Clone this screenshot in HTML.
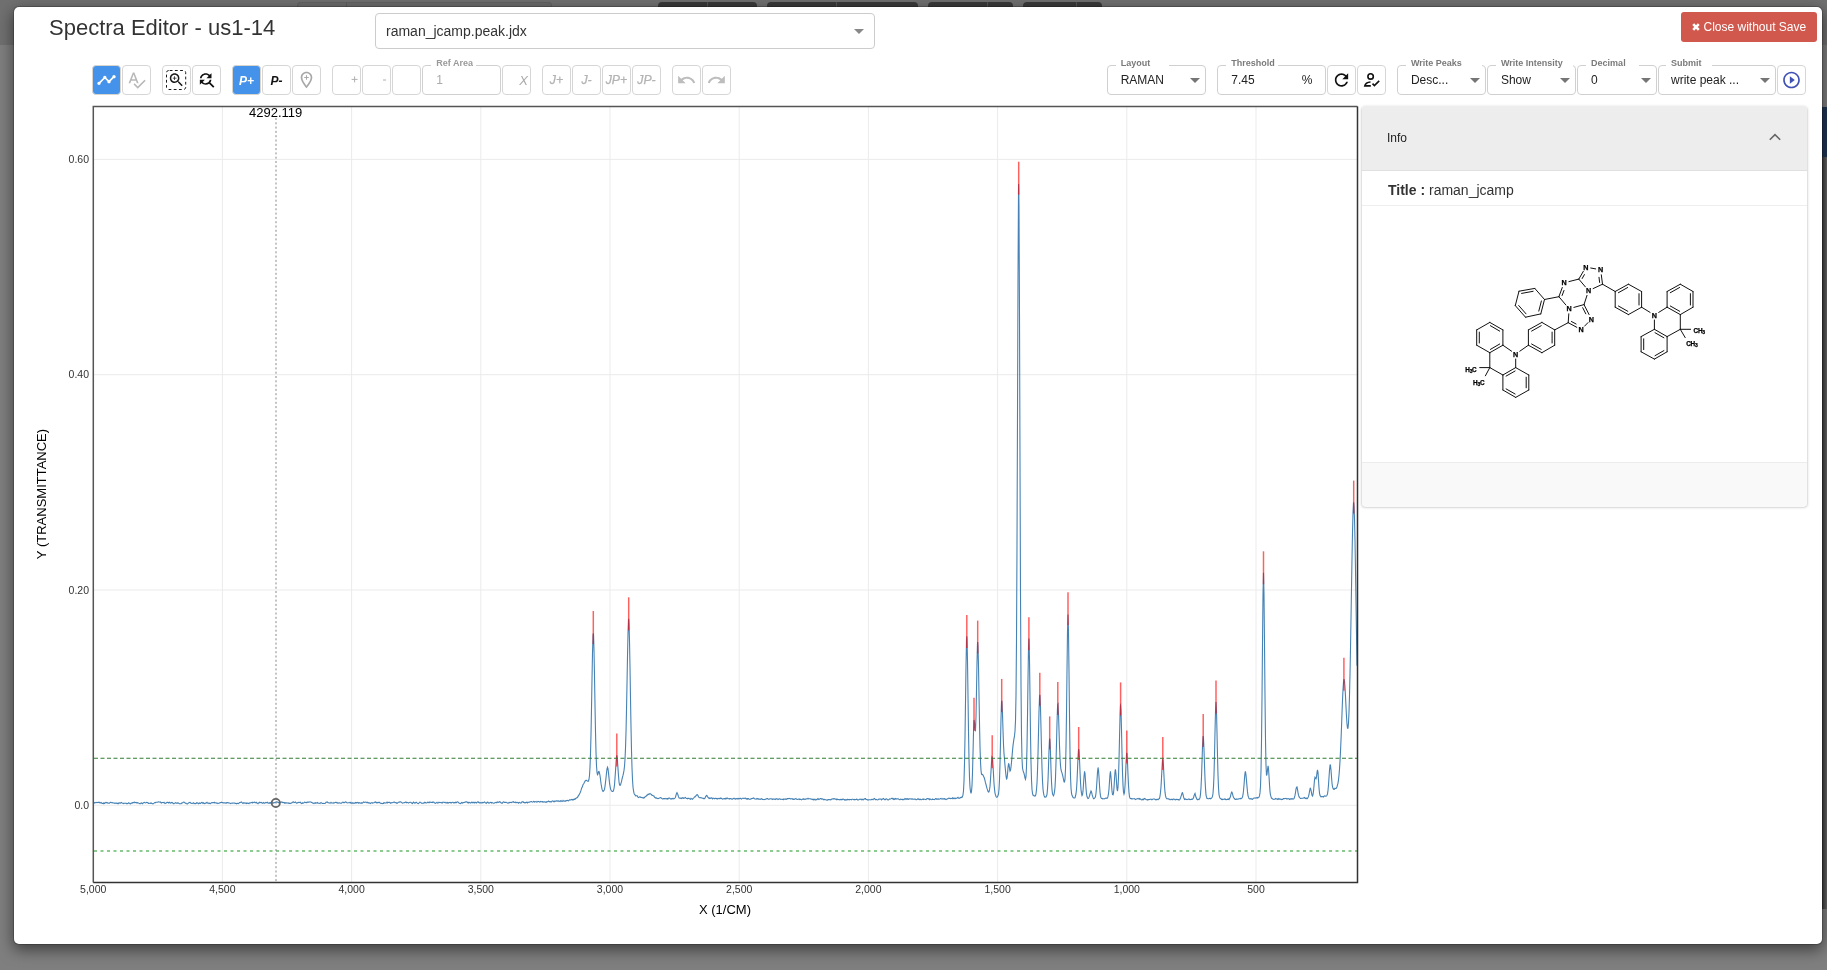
<!DOCTYPE html>
<html><head><meta charset="utf-8"><style>
html,body{margin:0;padding:0;width:1827px;height:970px;overflow:hidden;background:#7f7f7f;font-family:"Liberation Sans",sans-serif}
.abs{position:absolute}
.bgshape{position:absolute;top:2px;height:12px;border-radius:4px 4px 0 0}
.modal{position:absolute;left:13px;top:6px;width:1809.5px;height:939px;box-sizing:border-box;border:1px solid rgba(0,0,0,.2);background:#fff;background-clip:padding-box;border-radius:6px;box-shadow:0 5px 15px rgba(0,0,0,.5)}
.title{position:absolute;left:49px;top:15px;font-size:22px;color:#333;white-space:nowrap}
.sel{position:absolute;left:374.5px;top:13px;width:498px;height:34px;border:1px solid #ccc;border-radius:4px;background:#fff}
.sel span{position:absolute;left:10.5px;top:9px;font-size:14px;color:#333;white-space:nowrap}
.close{position:absolute;left:1681px;top:12px;width:136px;height:30px;border-radius:3px;background:#d0584c;color:#fff;font-size:12px;white-space:nowrap}
.tb{position:absolute;top:65px;height:30px;box-sizing:border-box;border:1px solid #d6d6d6;border-radius:4px;background:#fff;overflow:hidden}
.tb svg{position:absolute;left:-1px;top:-1px}
.tb.blue{background:#4492ea;border-color:#d9d4cc}
.pt{position:absolute;left:0;right:0;top:7.5px;text-align:center;font-size:12px;font-weight:bold;font-style:italic}
.jt{position:absolute;left:0;right:0;top:7px;text-align:center;font-size:12.3px;font-style:italic;color:#b3b3b3;-webkit-text-stroke:0.25px #b3b3b3}
.xt{position:absolute;right:2px;top:6.5px;font-size:13px;font-style:italic;color:#aaa}
.fld{position:absolute;top:65px;height:30px;box-sizing:border-box;border:1px solid #d0d0d0;border-radius:4px;background:#fff}
.fld .gap{position:absolute;top:-2px;height:3px;background:#fff}
.fld .lbl{position:absolute;top:-7.8px;margin-left:-0.7px;font-size:9px;font-weight:bold;color:#7a7a7a;white-space:nowrap}
.fld .val{position:absolute;top:6.5px;margin-left:-0.8px;font-size:12px;color:#222;white-space:nowrap}
.info{position:absolute;left:1362px;top:106px;width:445px;height:400px;background:#fff;box-shadow:0 1px 3px rgba(0,0,0,.3),0 1px 1px rgba(0,0,0,.18),0 2px 1px -1px rgba(0,0,0,.15);border-radius:3px}
.info .hd{position:absolute;left:0;top:0;width:445px;height:64px;background:#ededed;border-bottom:1px solid #e0e0e0;border-radius:3px 3px 0 0}
.info .ft{position:absolute;left:0;top:356px;width:445px;height:44px;background:#f9f9f9;border-top:1px solid #ececec;border-radius:0 0 3px 3px}
</style></head><body><div id="root" style="position:absolute;left:0;top:0;width:1827px;height:970px;will-change:transform">
<div class="abs" style="left:0;top:0;width:1827px;height:45px;background:#707070"></div>
<div class="bgshape" style="left:297px;width:255px;background:#6b6b6b;box-shadow:inset 0 0 0 1px #626262"></div>
<div class="abs" style="left:346px;top:2px;width:1px;height:12px;background:#5c5c5c"></div>
<div class="bgshape" style="left:658px;width:99px;background:#3a3a3a"></div>
<div class="abs" style="left:707px;top:2px;width:1px;height:12px;background:#555"></div>
<div class="bgshape" style="left:767px;width:151px;background:#3a3a3a"></div>
<div class="abs" style="left:836px;top:2px;width:1px;height:12px;background:#555"></div>
<div class="bgshape" style="left:928px;width:85px;background:#3a3a3a"></div>
<div class="abs" style="left:987px;top:2px;width:1px;height:12px;background:#555"></div>
<div class="bgshape" style="left:1023px;width:79px;background:#3a3a3a"></div>
<div class="abs" style="left:1076px;top:2px;width:1px;height:12px;background:#555"></div>
<div class="abs" style="left:1822px;top:157px;width:5px;height:752px;background:linear-gradient(to right,#3a3a3a,#6a6a6a)"></div>
<div class="abs" style="left:1822px;top:107px;width:5px;height:50px;background:#1f3554"></div>
<div class="modal"></div>
<div class="title">Spectra Editor - us1-14</div>
<div class="sel"><span>raman_jcamp.peak.jdx</span><svg style="position:absolute;left:478px;top:15px" width="10" height="5"><path d="M0,0 L10,0 L5,5Z" fill="#888"/></svg></div>
<div class="close"><svg style="position:absolute;left:11px;top:11px" width="8" height="8" viewBox="0 0 8 8"><path d="M1.2,1.2 L6.8,6.8 M6.8,1.2 L1.2,6.8" stroke="#fff" stroke-width="2.6"/></svg><span style="position:absolute;left:22.5px;top:7.5px">Close without Save</span></div>
<div class="tb blue" style="left:92px;width:29px"><svg width="29" height="30" viewBox="92 65 29 30"><g transform="translate(96.5,70) scale(0.8333)"><path d="M23 8c0 1.1-.9 2-2 2-.18 0-.35-.02-.51-.07l-3.56 3.55c.05.16.07.34.07.52 0 1.1-.9 2-2 2s-2-.9-2-2c0-.18.02-.36.07-.52l-2.55-2.55c-.16.05-.34.07-.52.07s-.36-.02-.52-.07l-4.55 4.56c.05.16.07.33.07.51 0 1.1-.9 2-2 2s-2-.9-2-2 .9-2 2-2c.18 0 .35.02.51.07l4.56-4.55C8.02 9.36 8 9.18 8 9c0-1.1.9-2 2-2s2 .9 2 2c0 .18-.02.36-.07.52l2.55 2.55c.16-.05.34-.07.52-.07s.36.02.52.07l3.55-3.56C19.02 8.35 19 8.18 19 8c0-1.1.9-2 2-2s2 .9 2 2z" fill="#fff"/></g></svg></div>
<div class="tb" style="left:122px;width:29px"><svg width="29" height="30" viewBox="122 65 29 30"><g transform="translate(126.5,70) scale(0.8333)"><path d="M12.45 16h2.09L9.43 3H7.57L2.46 16h2.09l1.12-3h5.64l1.14 3zm-6.02-5L8.5 5.48 10.57 11H6.43zm15.16.59l-8.09 8.09L9.83 16l-1.41 1.41 5.09 5.09L23 13l-1.41-1.41z" fill="#b8b8b8"/></g></svg></div>
<div class="tb" style="left:162px;width:29px"><svg width="29" height="30" viewBox="162 65 29 30"><rect x="166.5" y="70.5" width="19.2" height="19" rx="2.2" fill="none" stroke="#1a1a1a" stroke-width="1" stroke-dasharray="2.8,2.4" stroke-dashoffset="-1"/><g transform="translate(167.6,71.1) scale(0.74)"><path d="M15.5 14h-.79l-.28-.27C15.41 12.59 16 11.11 16 9.5 16 5.91 13.09 3 9.5 3S3 5.91 3 9.5 5.91 16 9.5 16c1.61 0 3.09-.59 4.23-1.57l.27.28v.79l5 4.99L20.49 19l-4.99-5zm-6 0C7.01 14 5 11.99 5 9.5S7.01 5 9.5 5 14 7.01 14 9.5 11.99 14 9.5 14zm.5-7H9v2H7v1h2v2h1v-2h2V9h-2z" fill="#1a1a1a"/></g></svg></div>
<div class="tb" style="left:192px;width:29px"><svg width="29" height="30" viewBox="192 65 29 30"><g transform="translate(196.5,69.8) scale(0.8333)"><path d="M11 6c1.38 0 2.63.56 3.54 1.46L12 10h6V4l-2.05 2.05C14.68 4.78 12.93 4 11 4c-3.53 0-6.43 2.61-6.92 6H6.1c.46-2.28 2.48-4 4.9-4zm5.64 9.14c.66-.9 1.12-1.97 1.28-3.14H15.9c-.46 2.28-2.48 4-4.9 4-1.38 0-2.63-.56-3.54-1.46L10 12H4v6l2.05-2.05C7.32 17.22 9.07 18 11 18c1.55 0 2.98-.51 4.14-1.36L20 21.49 21.49 20l-4.85-4.86z" fill="#111"/></g></svg></div>
<div class="tb blue" style="left:232px;width:29px"><span class="pt" style="color:#fff">P+</span></div>
<div class="tb" style="left:262px;width:29px"><span class="pt" style="color:#111">P-</span></div>
<div class="tb" style="left:292px;width:29px"><svg width="29" height="30" viewBox="292 65 29 30"><g transform="translate(296.5,70) scale(0.8333)"><path d="M12 2C8.13 2 5 5.13 5 9c0 5.25 7 13 7 13s7-7.75 7-13c0-3.87-3.13-7-7-7zM7 9c0-2.76 2.24-5 5-5s5 2.24 5 5c0 2.88-2.88 7.19-5 9.88C9.92 16.21 7 11.85 7 9z" fill="#a8a8a8"/><path d="M12 6.3V11.7M9.3 9H14.7" stroke="#a8a8a8" stroke-width="1.2"/></g></svg></div>
<div class="tb" style="left:332px;width:29px"><svg width="29" height="30" viewBox="332 65 29 30"><path d="M354.6,76.4 V82.4 M351.6,79.4 H357.6" stroke="#b0b0b0" stroke-width="1"/></svg></div>
<div class="tb" style="left:362px;width:29px"><svg width="29" height="30" viewBox="362 65 29 30"><path d="M383,80 H386.1" stroke="#b0b0b0" stroke-width="1"/></svg></div>
<div class="tb" style="left:392px;width:29px"></div>
<div class="fld" style="left:422px;width:79px"><span class="gap" style="left:7.5px;width:45px"></span><span class="lbl" style="left:14px;color:#9a9a9a">Ref Area</span><span class="val" style="left:14px;color:#aaa">1</span></div>
<div class="tb" style="left:502px;width:29px"><span class="xt">X</span></div>
<div class="tb" style="left:542px;width:29px"><span class="jt">J+</span></div>
<div class="tb" style="left:572px;width:29px"><span class="jt">J-</span></div>
<div class="tb" style="left:602px;width:29px"><span class="jt">JP+</span></div>
<div class="tb" style="left:632px;width:29px"><span class="jt">JP-</span></div>
<div class="tb" style="left:672px;width:29px"><svg width="29" height="30" viewBox="672 65 29 30"><g transform="translate(676.5,70) scale(0.8333)"><path d="M12.5 8c-2.65 0-5.05.99-6.9 2.6L2 7v9h9l-3.62-3.62c1.39-1.16 3.16-1.88 5.12-1.88 3.54 0 6.55 2.31 7.6 5.5l2.37-.78C21.08 11.03 17.15 8 12.5 8z" fill="#bdbdbd"/></g></svg></div>
<div class="tb" style="left:702px;width:29px"><svg width="29" height="30" viewBox="702 65 29 30"><g transform="translate(706.5,70) scale(0.8333)"><path d="M18.4 10.6C16.55 8.99 14.15 8 11.5 8c-4.65 0-8.58 3.03-9.960 7.22L3.9 16c1.05-3.19 4.05-5.5 7.6-5.5 1.95 0 3.730.72 5.12 1.88L13 16h9V7l-3.6 3.6z" fill="#bdbdbd"/></g></svg></div>
<div class="fld" style="left:1107px;width:99px"><span class="gap" style="left:8px;width:53px"></span><span class="lbl" style="left:13.5px">Layout</span><span class="val" style="left:13.5px">RAMAN</span><span style="position:absolute;left:82px;top:12px;width:10px;height:5px"><svg class="arr" style="display:block" width="10" height="5" viewBox="0 0 10 5"><path d="M0,0 L10,0 L5,5 Z" fill="#757575"/></svg></span></div>
<div class="fld" style="left:1217px;width:109px"><span class="gap" style="left:8px;width:52px"></span><span class="lbl" style="left:14px">Threshold</span><span class="val" style="left:14px">7.45</span><span class="val" style="left:84.5px">%</span></div>
<div class="tb" style="left:1327px;width:29px"><svg width="29" height="30" viewBox="1327 65 29 30"><g transform="translate(1331.5,70) scale(0.8333)"><path d="M17.65 6.35C16.2 4.9 14.21 4 12 4c-4.42 0-7.99 3.580-7.99 8s3.57 8 7.99 8c3.73 0 6.84-2.55 7.73-6h-2.08c-.82 2.33-3.04 4-5.65 4-3.31 0-6-2.69-6-6s2.69-6 6-6c1.66 0 3.14.69 4.22 1.78L13 11h7V4l-2.35 2.35z" fill="#111"/></g></svg></div>
<div class="tb" style="left:1357px;width:29px"><svg width="29" height="30" viewBox="1357 65 29 30"><circle cx="1370.6" cy="76.4" r="2.7" fill="none" stroke="#111" stroke-width="1.6"/><path d="M1370.5,82 C1367.5,82.2 1365.3,83.6 1364.8,85.9 L1370.8,85.9" fill="none" stroke="#111" stroke-width="1.6"/><path d="M1372.5,83.6 L1374.4,85.6 L1379.2,80.9" fill="none" stroke="#111" stroke-width="1.6"/></svg></div>
<div class="fld" style="left:1397px;width:88.5px"><span class="gap" style="left:8px;width:76px"></span><span class="lbl" style="left:13.7px">Write Peaks</span><span class="val" style="left:13.7px">Desc...</span><span style="position:absolute;left:71.5px;top:12px;width:10px;height:5px"><svg class="arr" style="display:block" width="10" height="5" viewBox="0 0 10 5"><path d="M0,0 L10,0 L5,5 Z" fill="#757575"/></svg></span></div>
<div class="fld" style="left:1487px;width:89px"><span class="gap" style="left:8px;width:76.5px"></span><span class="lbl" style="left:13.7px">Write Intensity</span><span class="val" style="left:13.7px">Show</span><span style="position:absolute;left:72px;top:12px;width:10px;height:5px"><svg class="arr" style="display:block" width="10" height="5" viewBox="0 0 10 5"><path d="M0,0 L10,0 L5,5 Z" fill="#757575"/></svg></span></div>
<div class="fld" style="left:1577px;width:79.5px"><span class="gap" style="left:7.6px;width:53.4px"></span><span class="lbl" style="left:13.8px">Decimal</span><span class="val" style="left:13.8px">0</span><span style="position:absolute;left:62.5px;top:12px;width:10px;height:5px"><svg class="arr" style="display:block" width="10" height="5" viewBox="0 0 10 5"><path d="M0,0 L10,0 L5,5 Z" fill="#757575"/></svg></span></div>
<div class="fld" style="left:1657.5px;width:118.5px"><span class="gap" style="left:7.3px;width:46.2px"></span><span class="lbl" style="left:13.3px">Submit</span><span class="val" style="left:13.3px">write peak ...</span><span style="position:absolute;left:101.5px;top:12px;width:10px;height:5px"><svg class="arr" style="display:block" width="10" height="5" viewBox="0 0 10 5"><path d="M0,0 L10,0 L5,5 Z" fill="#757575"/></svg></span></div>
<div class="tb" style="left:1777px;width:29px"><svg width="29" height="30" viewBox="1777 65 29 30"><g transform="translate(1781.5,70) scale(0.8333)"><path d="M10 16.5l6-4.5-6-4.5v9zM12 2C6.48 2 2 6.48 2 12s4.48 10 10 10 10-4.48 10-10S17.52 2 12 2zm0 18c-4.41 0-8-3.59-8-8s3.59-8 8-8 8 3.59 8 8-3.59 8-8 8z" fill="#3f51b5"/></g></svg></div>
<svg class="chart" width="1827" height="970" viewBox="0 0 1827 970" style="position:absolute;left:0;top:0">
<defs><clipPath id="pc"><rect x="93.5" y="107" width="1264" height="775"/></clipPath></defs>
<g stroke="#ebebeb" stroke-width="1"><line x1="1256" y1="107" x2="1256" y2="882" /><line x1="1126.8" y1="107" x2="1126.8" y2="882" /><line x1="997.6" y1="107" x2="997.6" y2="882" /><line x1="868.4" y1="107" x2="868.4" y2="882" /><line x1="739.2" y1="107" x2="739.2" y2="882" /><line x1="610" y1="107" x2="610" y2="882" /><line x1="480.8" y1="107" x2="480.8" y2="882" /><line x1="351.6" y1="107" x2="351.6" y2="882" /><line x1="222.4" y1="107" x2="222.4" y2="882" /><line x1="94" y1="805.3" x2="1357" y2="805.3" /><line x1="94" y1="590" x2="1357" y2="590" /><line x1="94" y1="374.7" x2="1357" y2="374.7" /><line x1="94" y1="159.4" x2="1357" y2="159.4" /></g>
<g clip-path="url(#pc)">
<path d="M93.5,802.9 L94,802.6 L94.5,803 L95,802.5 L95.5,802.8 L96,802.8 L96.5,802.4 L97,802.7 L97.5,802.3 L98,802.6 L98.5,802.3 L99,802.2 L99.5,802.5 L100,803.1 L100.5,802.7 L101,802.5 L101.5,802.9 L102,803.5 L102.5,803.4 L103,803.2 L103.5,803.7 L104,802.9 L104.5,803.4 L105,803 L105.5,802.7 L106,802.4 L106.5,802.5 L107,803.1 L107.5,802.7 L108,803 L108.5,803.2 L109,803 L109.5,803.1 L110,802.6 L110.5,802.3 L111,802.3 L111.5,802.8 L112,802.8 L112.5,802.7 L113,803 L113.5,803 L114,802.8 L114.5,803.2 L115,803.4 L115.5,803 L116,803.1 L116.5,803.1 L117,803.5 L117.5,803.6 L118,803.1 L118.5,803.6 L119,803 L119.5,802.9 L120,803.3 L120.5,802.8 L121,802.9 L121.5,802.5 L122,802.9 L122.5,803.2 L123,803.3 L123.5,803.6 L124,803.2 L124.5,803.3 L125,803.3 L125.5,803.3 L126,803.2 L126.5,803.5 L127,803.8 L127.5,803.5 L128,803.5 L128.5,802.8 L129,803.1 L129.5,803.3 L130,803.7 L130.5,803.8 L131,803.3 L131.5,803.1 L132,803.2 L132.5,802.6 L133,802.8 L133.5,802.5 L134,802.3 L134.5,802.1 L135,802.8 L135.5,802.5 L136,802.4 L136.5,802.6 L137,803.2 L137.5,802.6 L138,802.8 L138.5,802.9 L139,803.4 L139.5,803.6 L140,803.8 L140.5,803.2 L141,803.1 L141.5,802.9 L142,803.4 L142.5,803.7 L143,803.1 L143.5,802.7 L144,802.5 L144.5,802.4 L145,802.7 L145.5,802.9 L146,802.7 L146.5,802.3 L147,802.5 L147.5,802.6 L148,802.8 L148.5,803.4 L149,803.5 L149.5,803.3 L150,803.3 L150.5,803.4 L151,802.8 L151.5,803.3 L152,803.5 L152.5,803.7 L153,803.8 L153.5,803.4 L154,803.1 L154.5,802.6 L155,802.9 L155.5,802.5 L156,802.2 L156.5,802.2 L157,802.2 L157.5,802.3 L158,802.1 L158.5,801.9 L159,802 L159.5,802 L160,802.2 L160.5,802 L161,802.8 L161.5,803 L162,802.6 L162.5,802.5 L163,802.5 L163.5,802.6 L164,802.3 L164.5,803 L165,803.5 L165.5,803.3 L166,803.2 L166.5,802.6 L167,802.3 L167.5,802.4 L168,802.4 L168.5,803 L169,802.6 L169.5,802.3 L170,803 L170.5,803.1 L171,802.6 L171.5,802.8 L172,802.4 L172.5,802.7 L173,803.3 L173.5,803.6 L174,803.6 L174.5,803.1 L175,802.9 L175.5,802.6 L176,803 L176.5,803.1 L177,803.3 L177.5,803 L178,802.7 L178.5,803.2 L179,803.6 L179.5,803.8 L180,803.8 L180.5,803.8 L181,803.7 L181.5,803.1 L182,803.1 L182.5,802.9 L183,802.4 L183.5,802.1 L184,802.2 L184.5,802.3 L185,802.8 L185.5,803.4 L186,803.1 L186.5,803.6 L187,803.9 L187.5,804 L188,803.4 L188.5,803 L189,802.7 L189.5,802.5 L190,802.3 L190.5,802.7 L191,803.3 L191.5,803.5 L192,803.3 L192.5,803.3 L193,803.5 L193.5,802.8 L194,803.1 L194.5,803.5 L195,803.6 L195.5,803.6 L196,803.3 L196.5,802.8 L197,803.2 L197.5,802.9 L198,803.3 L198.5,803.7 L199,803.3 L199.5,803 L200,803.5 L200.5,803.5 L201,802.9 L201.5,802.5 L202,802.3 L202.5,803 L203,803.3 L203.5,802.8 L204,803.2 L204.5,803.6 L205,803.5 L205.5,803.1 L206,803.1 L206.5,802.6 L207,802.2 L207.5,803 L208,803.2 L208.5,803.1 L209,803.5 L209.5,803.2 L210,803.5 L210.5,803.7 L211,803.1 L211.5,802.7 L212,802.6 L212.5,802.5 L213,802.7 L213.5,802.6 L214,802.6 L214.5,802.3 L215,803 L215.5,802.8 L216,802.8 L216.5,803 L217,803.4 L217.5,803.1 L218,803.5 L218.5,803.3 L219,803.2 L219.5,803.1 L220,802.5 L220.5,802.6 L221,802.4 L221.5,802.1 L222,802.7 L222.5,802.5 L223,802.6 L223.5,803 L224,803 L224.5,802.8 L225,802.9 L225.5,803 L226,803.3 L226.5,802.7 L227,802.9 L227.5,802.6 L228,802.5 L228.5,803 L229,803 L229.5,803 L230,803.3 L230.5,803.6 L231,803.3 L231.5,803.2 L232,803.1 L232.5,803.1 L233,803.2 L233.5,803 L234,803 L234.5,803 L235,803.4 L235.5,803.4 L236,803.6 L236.5,803.8 L237,803.2 L237.5,803.2 L238,803.5 L238.5,803.7 L239,803 L239.5,802.5 L240,802.6 L240.5,802.3 L241,802.2 L241.5,802 L242,802.6 L242.5,803 L243,803.4 L243.5,802.8 L244,803.1 L244.5,803.2 L245,802.7 L245.5,803.2 L246,803.6 L246.5,803 L247,803.5 L247.5,803.1 L248,803 L248.5,803.5 L249,803.6 L249.5,803 L250,802.9 L250.5,802.9 L251,802.7 L251.5,802.5 L252,802.4 L252.5,802.9 L253,802.3 L253.5,802.6 L254,802.7 L254.5,802.2 L255,802.3 L255.5,802.7 L256,802.8 L256.5,802.3 L257,803.1 L257.5,803.3 L258,803.7 L258.5,802.9 L259,802.7 L259.5,802.2 L260,802.8 L260.5,802.6 L261,802.3 L261.5,802.4 L262,803.1 L262.5,803.4 L263,802.9 L263.5,802.5 L264,803.1 L264.5,803.1 L265,803.2 L265.5,802.6 L266,802.3 L266.5,802.7 L267,802.7 L267.5,802.3 L268,803 L268.5,803.1 L269,803.3 L269.5,802.7 L270,803.2 L270.5,802.6 L271,803.1 L271.5,803 L272,802.7 L272.5,802.9 L273,803.3 L273.5,802.9 L274,802.5 L274.5,802.7 L275,802.5 L275.5,802.2 L276,802.1 L276.5,801.9 L277,802 L277.5,802.1 L278,802.2 L278.5,802.8 L279,802.6 L279.5,802.7 L280,802.4 L280.5,802.4 L281,802.1 L281.5,802.1 L282,801.9 L282.5,802.5 L283,802.7 L283.5,802.4 L284,802.6 L284.5,803.2 L285,802.6 L285.5,803.1 L286,802.9 L286.5,802.9 L287,803.2 L287.5,803 L288,802.9 L288.5,803.1 L289,803.5 L289.5,803.1 L290,803.4 L290.5,803.4 L291,803.3 L291.5,803 L292,802.8 L292.5,802.3 L293,802.1 L293.5,801.9 L294,802.6 L294.5,802.4 L295,802.2 L295.5,802 L296,802.7 L296.5,803.2 L297,803.2 L297.5,802.8 L298,802.6 L298.5,802.4 L299,802.6 L299.5,802.3 L300,802.5 L300.5,802.3 L301,803.1 L301.5,803.5 L302,803.3 L302.5,802.8 L303,803.3 L303.5,802.9 L304,802.7 L304.5,802.2 L305,802.3 L305.5,802.5 L306,802.6 L306.5,802.4 L307,802.6 L307.5,802.1 L308,802.1 L308.5,802 L309,802.2 L309.5,801.9 L310,801.8 L310.5,802 L311,802 L311.5,802.4 L312,802.6 L312.5,803 L313,803.1 L313.5,803.2 L314,803.5 L314.5,803.1 L315,802.8 L315.5,803.3 L316,802.7 L316.5,803 L317,803.1 L317.5,802.5 L318,803 L318.5,803.3 L319,803.3 L319.5,803.3 L320,803.5 L320.5,802.8 L321,802.8 L321.5,802.8 L322,803.2 L322.5,803.4 L323,803.5 L323.5,803.3 L324,803.5 L324.5,803.5 L325,803.4 L325.5,802.9 L326,802.3 L326.5,802.1 L327,802.2 L327.5,802 L328,802.7 L328.5,802.8 L329,802.9 L329.5,803 L330,803.1 L330.5,803 L331,802.4 L331.5,802.9 L332,803.1 L332.5,803 L333,803 L333.5,803.1 L334,802.5 L334.5,802.9 L335,802.6 L335.5,802.2 L336,802.2 L336.5,802.7 L337,802.4 L337.5,802.8 L338,803.3 L338.5,803.1 L339,802.9 L339.5,802.8 L340,803 L340.5,803.2 L341,803.2 L341.5,803.2 L342,802.6 L342.5,802.3 L343,802.2 L343.5,802.7 L344,802.5 L344.5,802.7 L345,802.2 L345.5,801.9 L346,802 L346.5,802.5 L347,802.8 L347.5,803 L348,802.7 L348.5,802.7 L349,802.7 L349.5,802.7 L350,802.3 L350.5,802.9 L351,802.5 L351.5,803.2 L352,803.5 L352.5,802.7 L353,802.7 L353.5,803.1 L354,803.5 L354.5,803.1 L355,802.7 L355.5,802.4 L356,803.1 L356.5,802.6 L357,802.8 L357.5,802.4 L358,802.6 L358.5,803.1 L359,802.6 L359.5,803 L360,802.9 L360.5,803.3 L361,803.3 L361.5,802.8 L362,803.2 L362.5,803 L363,802.4 L363.5,802 L364,802.3 L364.5,802.4 L365,802.3 L365.5,802.1 L366,802.2 L366.5,802.2 L367,802.8 L367.5,802.2 L368,802.7 L368.5,803.1 L369,802.5 L369.5,803.1 L370,803.2 L370.5,803.5 L371,802.9 L371.5,802.7 L372,802.6 L372.5,803.2 L373,803.1 L373.5,802.8 L374,802.7 L374.5,802.5 L375,802.1 L375.5,801.9 L376,802.6 L376.5,802.4 L377,803 L377.5,802.6 L378,802.4 L378.5,802.6 L379,802.3 L379.5,802.3 L380,803 L380.5,803.3 L381,803.4 L381.5,803.3 L382,803.5 L382.5,803.7 L383,803.4 L383.5,803.4 L384,802.6 L384.5,802.9 L385,802.8 L385.5,803 L386,803.1 L386.5,802.7 L387,802.2 L387.5,802.9 L388,802.4 L388.5,802.5 L389,802.4 L389.5,802.3 L390,802.7 L390.5,803.3 L391,802.8 L391.5,802.9 L392,802.6 L392.5,802.7 L393,802.6 L393.5,802.3 L394,802.1 L394.5,802 L395,802.7 L395.5,802.7 L396,802.4 L396.5,803 L397,803.4 L397.5,803.1 L398,802.5 L398.5,802.3 L399,802 L399.5,802.1 L400,801.9 L400.5,801.9 L401,802 L401.5,802.3 L402,802.9 L402.5,803.1 L403,802.9 L403.5,802.7 L404,802.7 L404.5,802.6 L405,802.5 L405.5,802.1 L406,802.1 L406.5,802.8 L407,802.4 L407.5,802.5 L408,802.7 L408.5,803.1 L409,802.6 L409.5,802.4 L410,802.2 L410.5,802.3 L411,802.4 L411.5,803 L412,803.3 L412.5,803.5 L413,802.6 L413.5,802.1 L414,802.6 L414.5,803.1 L415,802.9 L415.5,802.9 L416,802.3 L416.5,802.3 L417,802.9 L417.5,803.2 L418,803.4 L418.5,803.6 L419,803 L419.5,802.4 L420,802.1 L420.5,802.4 L421,802.7 L421.5,803.2 L422,803.2 L422.5,803.2 L423,803.3 L423.5,803 L424,802.9 L424.5,802.3 L425,802.8 L425.5,802.4 L426,803 L426.5,803 L427,802.7 L427.5,802.3 L428,802.2 L428.5,802.5 L429,802.8 L429.5,802.3 L430,802 L430.5,802.3 L431,802.5 L431.5,802.5 L432,802.2 L432.5,802.5 L433,802 L433.5,802.1 L434,802.3 L434.5,802.9 L435,803 L435.5,803.3 L436,803 L436.5,802.6 L437,802.3 L437.5,803 L438,803.1 L438.5,802.7 L439,802.2 L439.5,802.4 L440,802.7 L440.5,802.6 L441,802.3 L441.5,802.6 L442,803.1 L442.5,802.6 L443,802.1 L443.5,802.2 L444,802.3 L444.5,802.6 L445,802.3 L445.5,802.8 L446,803 L446.5,802.9 L447,802.4 L447.5,803 L448,802.7 L448.5,803 L449,802.6 L449.5,802.3 L450,802.7 L450.5,802.5 L451,803 L451.5,802.9 L452,802.4 L452.5,802.2 L453,802.3 L453.5,802.6 L454,803.1 L454.5,802.5 L455,802.5 L455.5,802.2 L456,802.9 L456.5,802.4 L457,802 L457.5,801.8 L458,802 L458.5,802.7 L459,803.1 L459.5,803.2 L460,803.5 L460.5,803.6 L461,803 L461.5,802.5 L462,803 L462.5,803.1 L463,802.4 L463.5,802.7 L464,802.5 L464.5,802.4 L465,802.3 L465.5,802.1 L466,801.7 L466.5,801.9 L467,802 L467.5,802.7 L468,802.3 L468.5,802.9 L469,802.5 L469.5,802.4 L470,802.8 L470.5,803.1 L471,802.8 L471.5,802.2 L472,802.4 L472.5,802.3 L473,802.9 L473.5,802.4 L474,802.4 L474.5,802.9 L475,802.3 L475.5,802.3 L476,802.8 L476.5,803 L477,802.3 L477.5,801.9 L478,801.7 L478.5,802.5 L479,802.3 L479.5,802.7 L480,803.1 L480.5,802.7 L481,802.4 L481.5,803 L482,803 L482.5,802.5 L483,802.8 L483.5,802.5 L484,802.3 L484.5,801.9 L485,802.4 L485.5,803 L486,803 L486.5,803.3 L487,802.5 L487.5,802.2 L488,802.3 L488.5,802.9 L489,803.3 L489.5,802.9 L490,802.5 L490.5,802.4 L491,802.5 L491.5,803 L492,802.5 L492.5,802.8 L493,803 L493.5,803.2 L494,803.2 L494.5,803.1 L495,802.7 L495.5,802.4 L496,802.3 L496.5,802.7 L497,802.2 L497.5,802 L498,802.5 L498.5,802.3 L499,801.9 L499.5,801.6 L500,802.1 L500.5,802.1 L501,802.8 L501.5,803.1 L502,803.4 L502.5,802.8 L503,802.2 L503.5,801.9 L504,802.1 L504.5,802.5 L505,802.5 L505.5,802.2 L506,802.2 L506.5,802.5 L507,802.7 L507.5,802.9 L508,803.1 L508.5,803 L509,802.4 L509.5,802.8 L510,802.4 L510.5,802.5 L511,802.3 L511.5,802.6 L512,802.2 L512.5,802 L513,801.9 L513.5,801.7 L514,802.4 L514.5,802.5 L515,802.3 L515.5,802.2 L516,802.8 L516.5,802.6 L517,802.2 L517.5,802.6 L518,802.7 L518.5,803.1 L519,802.4 L519.5,802.3 L520,802.7 L520.5,802.9 L521,803.1 L521.5,802.3 L522,802.1 L522.5,801.7 L523,801.6 L523.5,802.4 L524,802.5 L524.5,802.9 L525,802.5 L525.5,802.8 L526,802.5 L526.5,802.2 L527,802.5 L527.5,802.9 L528,802.2 L528.5,802.3 L529,802.4 L529.5,802 L530,802 L530.5,801.7 L531,801.6 L531.5,801.5 L532,801.9 L532.5,802.2 L533,801.9 L533.5,801.4 L534,801.5 L534.5,802 L535,801.7 L535.5,801.7 L536,801.5 L536.5,802.1 L537,802.2 L537.5,801.7 L538,801.4 L538.5,801.6 L539,801.8 L539.5,802.1 L540,801.6 L540.5,801.4 L541,801.9 L541.5,801.8 L542,801.6 L542.5,801.5 L543,802.2 L543.5,801.9 L544,801.9 L544.5,801.7 L545,801.7 L545.5,802.1 L546,802.5 L546.5,802 L547,801.6 L547.5,801.9 L548,801.4 L548.5,801 L549,801.7 L549.5,801.5 L550,801.9 L550.5,801.6 L551,802 L551.5,801.7 L552,801.2 L552.5,800.8 L553,801.1 L553.5,801.3 L554,801.8 L554.5,801.1 L555,801.3 L555.5,801.1 L556,801.2 L556.5,800.8 L557,800.7 L557.5,800.9 L558,801.4 L558.5,800.8 L559,800.9 L559.5,801.3 L560,801.6 L560.5,801 L561,800.6 L561.5,801.2 L562,801.5 L562.5,801.2 L563,800.5 L563.5,801.1 L564,800.8 L564.5,801.2 L565,801.1 L565.5,801.2 L566,800.6 L566.5,800.8 L567,800.4 L567.5,800.3 L568,800.7 L568.5,800.9 L569,800.3 L569.5,799.9 L570,799.9 L570.5,800 L571,799.9 L571.5,799.5 L572,799.3 L572.5,799.7 L573,800.1 L573.5,799.3 L574,799.4 L574.5,799.5 L575,798.7 L575.5,799 L576,798.2 L576.5,798.1 L577,797.7 L577.5,797.3 L578,796.4 L578.5,795.6 L579,794.9 L579.5,793.9 L580,793 L580.5,791.7 L581,790.4 L581.5,788.6 L582,787.6 L582.5,786.3 L583,784.8 L583.5,784 L584,783.2 L584.5,782.2 L585,781.1 L585.5,780.8 L586,780.3 L586.5,780.3 L587,780.8 L587.5,780.9 L588,781.4 L588.5,781.2 L589,779.2 L589.5,775.5 L590,767.1 L590.5,754.1 L591,734.4 L591.5,708.4 L592,679.2 L592.5,652.9 L593,635.7 L593.3,633.3 L593.5,634.4 L594,649.9 L594.5,676.1 L595,705.2 L595.5,731.9 L596,751.9 L596.5,765.8 L597,772.3 L597.5,774.6 L598,773.9 L598.5,771.6 L599,771.4 L599.5,773.2 L600,775.5 L600.5,779.3 L601,783.5 L601.5,786.3 L602,789.2 L602.5,790.4 L603,791.4 L603.5,791 L604,790.4 L604.5,789.4 L605,786.3 L605.5,782.4 L606,777.9 L606.5,773 L607,768.8 L607.5,767.2 L608,768.6 L608.5,773.1 L609,778 L609.5,782.9 L610,786 L610.5,788.8 L611,789.9 L611.5,790.8 L612,791.4 L612.5,791.3 L613,791.4 L613.5,790.5 L614,788.4 L614.5,785 L615,778.3 L615.5,771.1 L616,762.9 L616.5,756.7 L616.8,755.8 L617,755.8 L617.5,761.2 L618,768.6 L618.5,775.9 L619,781.8 L619.5,784.8 L620,785.4 L620.5,785.2 L621,783.2 L621.5,781.7 L622,779.2 L622.5,777.2 L623,775.4 L623.5,773.1 L624,770.4 L624.5,766.2 L625,759.3 L625.5,748.4 L626,732.2 L626.5,710.6 L627,684.1 L627.5,656.4 L628,633.4 L628.5,620 L628.7,618.9 L629,623 L629.5,640.5 L630,667.6 L630.5,698.3 L631,726.8 L631.5,750.4 L632,767.7 L632.5,779.7 L633,787 L633.5,790.7 L634,793.2 L634.5,794.4 L635,794.7 L635.5,795.9 L636,795.8 L636.5,795.8 L637,795.7 L637.5,796.4 L638,797.1 L638.5,797.5 L639,797.3 L639.5,797.1 L640,796.7 L640.5,797.2 L641,797.5 L641.5,797.4 L642,797.7 L642.5,797.6 L643,798 L643.5,798.1 L644,797.5 L644.5,797.7 L645,796.8 L645.5,796.7 L646,796.3 L646.5,795.7 L647,795 L647.5,795.1 L648,794.3 L648.5,794.2 L649,794.5 L649.5,793.8 L650,793.5 L650.5,793.9 L651,794.2 L651.5,794.7 L652,795.4 L652.5,795.3 L653,795.6 L653.5,795.9 L654,796 L654.5,797.1 L655,797.7 L655.5,798.1 L656,797.6 L656.5,798.2 L657,798.5 L657.5,798.4 L658,798.7 L658.5,798.6 L659,798.2 L659.5,797.9 L660,797.8 L660.5,797.6 L661,797.8 L661.5,798.3 L662,798.6 L662.5,799 L663,799 L663.5,798.6 L664,798.6 L664.5,798.5 L665,798.8 L665.5,798.7 L666,798.4 L666.5,798.6 L667,799.1 L667.5,798.5 L668,798.9 L668.5,798.2 L669,798.1 L669.5,798 L670,798.4 L670.5,799 L671,799 L671.5,798.6 L672,799 L672.5,798.6 L673,798.2 L673.5,798.8 L674,798.7 L674.5,798.6 L675,798 L675.5,797.2 L676,795.1 L676.5,793.5 L677,792.6 L677.5,793.6 L678,795 L678.5,796.9 L679,797.9 L679.5,798.1 L680,798 L680.5,798.4 L681,798 L681.5,798.6 L682,798.2 L682.5,797.8 L683,797.6 L683.5,798.4 L684,798.3 L684.5,798 L685,797.7 L685.5,797.5 L686,798.1 L686.5,798.4 L687,798.6 L687.5,798.8 L688,798.2 L688.5,798.4 L689,798.3 L689.5,798.7 L690,799 L690.5,799.2 L691,798.4 L691.5,798.8 L692,799.1 L692.5,799.3 L693,798.5 L693.5,798.1 L694,797.6 L694.5,796.9 L695,797 L695.5,796.6 L696,795.7 L696.5,795.2 L696.8,795 L697,794.6 L697.5,794.8 L698,795.4 L698.5,796.9 L699,797.3 L699.5,797.6 L700,797.9 L700.5,797.6 L701,797.7 L701.5,797.7 L702,798.2 L702.5,798.2 L703,798.1 L703.5,798.7 L704,798.5 L704.5,798.7 L705,798.2 L705.5,796.8 L706,796 L706.5,795.4 L706.7,795.8 L707,795.7 L707.5,796.6 L708,797.4 L708.5,797.7 L709,798.5 L709.5,798.1 L710,798.6 L710.5,798.2 L711,797.8 L711.5,797.8 L712,798.3 L712.5,798.9 L713,798.2 L713.5,798.3 L714,798.4 L714.5,798.8 L715,798.3 L715.5,798.4 L716,798.3 L716.5,798.8 L717,798.4 L717.5,799 L718,798.6 L718.5,798.3 L719,798.6 L719.5,798.6 L720,798.2 L720.5,798.5 L721,798.1 L721.5,798.6 L722,798.8 L722.5,799.1 L723,799 L723.5,798.7 L724,798.6 L724.5,798.5 L725,799 L725.5,798.4 L726,798.9 L726.5,798.3 L727,798.1 L727.5,798.1 L728,798.7 L728.5,798.7 L729,798.6 L729.5,799 L730,798.6 L730.5,798.6 L731,798.6 L731.5,798.9 L732,799.1 L732.5,799.1 L733,798.8 L733.5,798.5 L734,798.2 L734.5,798.8 L735,798.9 L735.5,799.1 L736,798.6 L736.5,798.6 L737,798.9 L737.5,798.9 L738,798.4 L738.5,798.5 L739,799 L739.5,798.6 L740,798.3 L740.5,798.3 L741,798.7 L741.5,799.1 L742,798.6 L742.5,798.3 L743,798.2 L743.5,798.2 L744,798.5 L744.5,798.2 L745,798.2 L745.5,798.1 L746,798.9 L746.5,799.1 L747,798.5 L747.5,799.1 L748,798.6 L748.5,798.5 L749,799.2 L749.5,799.3 L750,799.4 L750.5,799.1 L751,798.6 L751.5,798.9 L752,798.4 L752.5,798.3 L753,798.4 L753.5,798 L754,798.2 L754.5,798.8 L755,799 L755.5,799 L756,799.1 L756.5,798.9 L757,798.5 L757.5,798.8 L758,798.7 L758.5,799 L759,799.4 L759.5,799.1 L760,799.1 L760.5,799.3 L761,799 L761.5,798.7 L762,799 L762.5,799.4 L763,799.5 L763.5,799.5 L764,799.6 L764.5,799.5 L765,799.4 L765.5,799.2 L766,798.9 L766.5,799 L767,798.5 L767.5,798.6 L768,799 L768.5,799.2 L769,799.3 L769.5,798.9 L770,798.8 L770.5,798.8 L771,799 L771.5,798.9 L772,799.1 L772.5,799.5 L773,798.9 L773.5,799.1 L774,799.4 L774.5,799.1 L775,799 L775.5,799.5 L776,798.8 L776.5,798.9 L777,798.6 L777.5,799.1 L778,799.5 L778.5,799.3 L779,798.8 L779.5,798.9 L780,799 L780.5,799.3 L781,799.2 L781.5,799.3 L782,799.5 L782.5,799.4 L783,799.1 L783.5,799.6 L784,799 L784.5,799.2 L785,799 L785.5,799.3 L786,798.8 L786.5,799.4 L787,799.1 L787.5,798.6 L788,798.5 L788.5,798.6 L789,798.3 L789.5,798.5 L790,798.6 L790.5,799 L791,798.9 L791.5,798.7 L792,798.6 L792.5,799 L793,799.5 L793.5,799.4 L794,799 L794.5,799.4 L795,799.1 L795.5,798.8 L796,798.5 L796.5,799.1 L797,799.4 L797.5,799.5 L798,799.3 L798.5,799.3 L799,798.9 L799.5,799.5 L800,799.2 L800.5,799.3 L801,799.6 L801.5,799.8 L802,799.5 L802.5,799.1 L803,799.2 L803.5,798.8 L804,799.3 L804.5,799.1 L805,799.5 L805.5,799.1 L806,799 L806.5,798.8 L807,798.9 L807.5,798.7 L808,798.3 L808.5,798.9 L809,798.8 L809.5,798.7 L810,798.7 L810.5,798.9 L811,798.9 L811.5,799.2 L812,799.4 L812.5,799.2 L813,799.7 L813.5,799.9 L814,799.1 L814.5,799.5 L815,799.9 L815.5,799.9 L816,799.3 L816.5,799.6 L817,799.6 L817.5,798.9 L818,798.5 L818.5,799.3 L819,799.5 L819.5,799.1 L820,798.7 L820.5,798.6 L821,798.6 L821.5,799.2 L822,799 L822.5,798.8 L823,799.4 L823.5,799.7 L824,799.2 L824.5,799.7 L825,799.6 L825.5,799.8 L826,799.8 L826.5,800 L827,800.1 L827.5,800.1 L828,799.5 L828.5,799.6 L829,799.6 L829.5,799.7 L830,799.5 L830.5,799.9 L831,799.7 L831.5,799.3 L832,799 L832.5,798.8 L833,799 L833.5,798.7 L834,798.9 L834.5,798.7 L835,799 L835.5,799.1 L836,799.3 L836.5,799.7 L837,799 L837.5,799.6 L838,799.5 L838.5,799.5 L839,799.6 L839.5,799.9 L840,799.6 L840.5,799.4 L841,799.9 L841.5,799.3 L842,799.5 L842.5,799.6 L843,799 L843.5,799.3 L844,799.6 L844.5,800 L845,799.6 L845.5,800.1 L846,799.8 L846.5,799.7 L847,800 L847.5,799.3 L848,799.6 L848.5,799.7 L849,799.4 L849.5,799.8 L850,799.5 L850.5,799.5 L851,799.5 L851.5,799.8 L852,799.3 L852.5,799.3 L853,799.3 L853.5,799.4 L854,799.8 L854.5,799.4 L855,799.8 L855.5,799.5 L856,799.5 L856.5,799.2 L857,799.3 L857.5,799.9 L858,799.9 L858.5,800 L859,799.6 L859.5,799.3 L860,799.1 L860.5,799.3 L861,799.5 L861.5,799.8 L862,799.1 L862.5,799.5 L863,799.9 L863.5,799.7 L864,799.1 L864.5,799 L865,798.6 L865.5,798.6 L866,799.4 L866.5,799.5 L867,799.6 L867.5,799.8 L868,800.1 L868.5,799.9 L869,799.8 L869.5,799.8 L870,799.8 L870.5,799.7 L871,799.8 L871.5,799.3 L872,799.5 L872.5,799.4 L873,799.7 L873.5,799.1 L874,798.8 L874.5,798.5 L875,799.1 L875.5,799.7 L876,799.7 L876.5,799.4 L877,799.7 L877.5,799.9 L878,799.7 L878.5,799.3 L879,799.1 L879.5,799.1 L880,799 L880.5,799 L881,799.3 L881.5,799.8 L882,799.1 L882.5,799.2 L883,798.8 L883.5,798.5 L884,799.2 L884.5,799.3 L885,799.8 L885.5,799.5 L886,798.9 L886.5,798.9 L887,799.1 L887.5,799.7 L888,800 L888.5,799.7 L889,799.4 L889.5,798.9 L890,799.2 L890.5,798.9 L891,798.7 L891.5,798.4 L892,798.2 L892.5,798.8 L893,798.5 L893.5,799.3 L894,798.8 L894.5,799.4 L895,798.9 L895.5,798.5 L896,799 L896.5,798.8 L897,799.2 L897.5,798.9 L898,798.5 L898.5,799.1 L899,799.4 L899.5,799.7 L900,799.7 L900.5,799.1 L901,799.2 L901.5,799.5 L902,799.3 L902.5,799.7 L903,799.2 L903.5,799.7 L904,799.7 L904.5,799 L905,798.5 L905.5,798.9 L906,799.4 L906.5,798.8 L907,798.7 L907.5,799.2 L908,798.8 L908.5,799.3 L909,799.2 L909.5,798.7 L910,798.7 L910.5,799 L911,799 L911.5,799.2 L912,798.8 L912.5,799.2 L913,799 L913.5,799.2 L914,799.3 L914.5,799.1 L915,799 L915.5,799.3 L916,799.7 L916.5,799.8 L917,799.6 L917.5,799.1 L918,798.6 L918.5,799.3 L919,799.4 L919.5,799.6 L920,799.2 L920.5,799.3 L921,799.7 L921.5,799.8 L922,799.6 L922.5,799.2 L923,799 L923.5,799.5 L924,799.1 L924.5,799.3 L925,799.3 L925.5,799.6 L926,799.7 L926.5,799.2 L927,798.6 L927.5,798.5 L928,798.6 L928.5,798.8 L929,799.2 L929.5,799.6 L930,798.8 L930.5,799.2 L931,799.5 L931.5,799.7 L932,799.5 L932.5,799 L933,799.4 L933.5,799.5 L934,799.5 L934.5,799.7 L935,799.2 L935.5,798.6 L936,798.8 L936.5,799.2 L937,798.7 L937.5,799.1 L938,799.5 L938.5,798.9 L939,799 L939.5,799.2 L940,799 L940.5,798.6 L941,798.4 L941.5,798.9 L942,799.2 L942.5,799 L943,798.5 L943.5,798.9 L944,799.2 L944.5,798.7 L945,798.8 L945.5,799.2 L946,799.5 L946.5,799.2 L947,799 L947.5,799 L948,798.5 L948.5,798.2 L949,798.1 L949.5,798.5 L950,798.4 L950.5,798.6 L951,798.5 L951.5,798.5 L952,798.2 L952.5,797.8 L953,798.7 L953.5,798.5 L954,798 L954.5,798.3 L955,798.7 L955.5,798.2 L956,798.4 L956.5,798.2 L957,798.2 L957.5,797.7 L958,797.3 L958.5,798.1 L959,798.4 L959.5,798.1 L960,798 L960.5,797.5 L961,797.7 L961.5,797.2 L962,797.3 L962.5,796.6 L963,794.8 L963.5,790.7 L964,781 L964.5,763.6 L965,737 L965.5,702.4 L966,666.4 L966.5,640.8 L966.8,636.4 L967,639.1 L967.5,660.7 L968,695.9 L968.5,731.4 L969,758.7 L969.5,777.2 L970,787.2 L970.5,791.4 L971,793.3 L971.5,791.3 L972,785.5 L972.5,772.9 L973,753.8 L973.5,732.5 L974,719.9 L974.5,722.6 L975,730.3 L975.5,730.7 L976,716.7 L976.5,690.5 L977,662.2 L977.5,644.1 L977.7,642.1 L978,646 L978.5,665.9 L979,694.8 L979.5,722.9 L980,746.4 L980.5,761.8 L981,770.2 L981.5,774.2 L982,774.6 L982.5,774.4 L983,775 L983.5,776.2 L984,777.3 L984.5,778.5 L985,780.6 L985.5,782.9 L986,784.5 L986.5,786.6 L987,788.4 L987.5,789.8 L988,791.4 L988.5,792 L989,791.8 L989.5,789.9 L990,786.3 L990.5,779.3 L991,771.3 L991.5,762.6 L992,756.9 L992.2,757.2 L992.5,758.1 L993,765.2 L993.5,774.4 L994,783.2 L994.5,789.1 L995,793.1 L995.5,794.9 L996,796.5 L996.5,797.1 L997,797.1 L997.5,796.6 L998,795.5 L998.5,794 L999,789.2 L999.5,780 L1000,763.8 L1000.5,742.1 L1001,718.9 L1001.5,703.3 L1001.7,700.8 L1002,701.6 L1002.5,714 L1003,730.3 L1003.5,744.4 L1004,753.5 L1004.5,759.4 L1005,765.4 L1005.5,770.8 L1006,775.6 L1006.5,778.9 L1007,778.2 L1007.5,774.3 L1008,767.4 L1008.5,763.9 L1009,764.2 L1009.5,768.4 L1010,771.1 L1010.5,770.3 L1011,767.2 L1011.5,762.2 L1012,756.6 L1012.5,750.8 L1013,745.6 L1013.5,741.8 L1014,738.7 L1014.5,735.9 L1015,731 L1015.5,720.7 L1016,695.6 L1016.5,640.1 L1017,545.7 L1017.5,414.9 L1018,279.3 L1018.5,191.1 L1018.7,183.9 L1019,206.6 L1019.5,316.1 L1020,461.5 L1020.5,593.1 L1021,684.4 L1021.5,735.3 L1022,758.8 L1022.5,768 L1023,770.4 L1023.5,772 L1024,773.3 L1024.5,775.4 L1025,778.2 L1025.5,779.4 L1026,776.5 L1026.5,766.7 L1027,746.6 L1027.5,715.9 L1028,679 L1028.5,648 L1028.9,638.6 L1029,639.7 L1029.5,660.1 L1030,696.8 L1030.5,734.1 L1031,762.4 L1031.5,779.8 L1032,789.4 L1032.5,793.3 L1033,795.2 L1033.5,795.3 L1034,796 L1034.5,795.9 L1035,796.1 L1035.5,795.7 L1036,793.8 L1036.5,789.5 L1037,783 L1037.5,771 L1038,754.1 L1038.5,732.6 L1039,711.5 L1039.5,697.6 L1039.8,694.8 L1040,695.6 L1040.5,707.9 L1041,728.3 L1041.5,749.2 L1042,767.8 L1042.5,780.9 L1043,789 L1043.5,793 L1044,795.4 L1044.5,796.7 L1045,797.3 L1045.5,797 L1046,797 L1046.5,796.1 L1047,794.3 L1047.5,788.9 L1048,780.2 L1048.5,766.6 L1049,750.6 L1049.5,739.8 L1049.7,738.6 L1050,741 L1050.5,752.8 L1051,769.2 L1051.5,781.9 L1052,789.8 L1052.5,793.6 L1053,795 L1053.5,795.8 L1054,794.4 L1054.5,791.8 L1055,787.2 L1055.5,777.6 L1056,762.4 L1056.5,743.4 L1057,723.1 L1057.5,707.8 L1057.8,704.2 L1058,703.9 L1058.5,713.7 L1059,729.8 L1059.5,745.4 L1060,757.6 L1060.5,765.6 L1061,769.7 L1061.5,771.6 L1062,772.9 L1062.5,774.9 L1063,776.8 L1063.5,779.5 L1064,781.9 L1064.5,782 L1065,779.2 L1065.5,769.3 L1066,747.5 L1066.5,713.4 L1067,670.6 L1067.5,631 L1068,614.4 L1068.5,632.1 L1069,672.1 L1069.5,716.3 L1070,752.7 L1070.5,776.1 L1071,788 L1071.5,793.2 L1072,795.3 L1072.5,796.2 L1073,797.3 L1073.5,797.7 L1074,798 L1074.5,798 L1075,797.8 L1075.5,796 L1076,793.7 L1076.5,789.3 L1077,781.2 L1077.5,769.4 L1078,757.5 L1078.5,749.9 L1078.7,749 L1079,750.7 L1079.5,759.2 L1080,771.3 L1080.5,782.3 L1081,789.4 L1081.5,793.4 L1082,795.6 L1082.5,794.8 L1083,791.2 L1083.5,784.2 L1084,776.5 L1084.5,771.9 L1084.6,771.8 L1085,773.4 L1085.5,780.8 L1086,788.3 L1086.5,794 L1087,796.5 L1087.5,797.8 L1088,798.6 L1088.5,798.4 L1089,797.4 L1089.5,796.1 L1090,794 L1090.5,792.4 L1091,791 L1091.5,791.8 L1092,794.2 L1092.5,795.8 L1093,797.4 L1093.5,798.6 L1094,798.6 L1094.5,798.2 L1095,797.7 L1095.5,796.6 L1096,793.3 L1096.5,787.8 L1097,780.1 L1097.5,772.4 L1098,768.1 L1098.1,768 L1098.5,770.1 L1099,776.9 L1099.5,785.2 L1100,792.1 L1100.5,795.9 L1101,797.7 L1101.5,798.5 L1102,798.4 L1102.5,798.8 L1103,798.7 L1103.5,798.8 L1104,798.9 L1104.5,798.8 L1105,798.5 L1105.5,798.3 L1106,798.1 L1106.5,798.3 L1107,798.1 L1107.5,798 L1108,796.4 L1108.5,793.7 L1109,789 L1109.5,781.2 L1110,774.3 L1110.4,771.9 L1110.5,771.9 L1111,777.1 L1111.5,784.3 L1112,791.2 L1112.5,794.5 L1113,794.9 L1113.5,793.3 L1114,787.7 L1114.5,779.3 L1115,771.8 L1115.4,769.4 L1115.5,769.9 L1116,774.2 L1116.5,781.9 L1117,788.9 L1117.5,791.2 L1118,787.3 L1118.5,777.3 L1119,760.2 L1119.5,738.3 L1120,716.8 L1120.5,705.2 L1120.6,705 L1121,710.5 L1121.5,729.6 L1122,752.7 L1122.5,772.3 L1123,785.1 L1123.5,792.1 L1124,794.2 L1124.5,792.6 L1125,786 L1125.5,776.4 L1126,763.6 L1126.5,754.6 L1126.8,752.8 L1127,753.6 L1127.5,762.4 L1128,774.5 L1128.5,785.1 L1129,792.6 L1129.5,796.7 L1130,798.1 L1130.5,798.4 L1131,798.6 L1131.5,798.6 L1132,799 L1132.5,798.7 L1133,798.7 L1133.5,798.8 L1134,798.8 L1134.5,798.7 L1135,799.1 L1135.5,799.5 L1136,799.3 L1136.5,799.1 L1137,798.8 L1137.5,798.7 L1138,798.4 L1138.5,798.8 L1139,799 L1139.5,798.6 L1140,799.3 L1140.5,799 L1141,799.4 L1141.5,799.7 L1142,800 L1142.5,799.3 L1143,799.2 L1143.5,799.6 L1144,798.9 L1144.5,798.5 L1145,798.9 L1145.5,799 L1146,799.6 L1146.5,799.7 L1147,799.6 L1147.5,800 L1148,799.7 L1148.5,799.5 L1149,799.6 L1149.5,799.4 L1150,799.2 L1150.5,799.3 L1151,799.1 L1151.5,799.7 L1152,799.7 L1152.5,799.6 L1153,799 L1153.5,799 L1154,799 L1154.5,799.1 L1155,799.3 L1155.5,799.6 L1156,800 L1156.5,799.6 L1157,799.4 L1157.5,799.4 L1158,799.7 L1158.5,799.2 L1159,798.8 L1159.5,798.4 L1160,796.1 L1160.5,792.4 L1161,786.8 L1161.5,778.1 L1162,768.1 L1162.5,760.2 L1162.8,759.3 L1163,760 L1163.5,766.5 L1164,776.5 L1164.5,785.8 L1165,792.2 L1165.5,795.7 L1166,797.5 L1166.5,798.5 L1167,798.9 L1167.5,798.7 L1168,798.6 L1168.5,799.1 L1169,799.3 L1169.5,799.2 L1170,799.8 L1170.5,799.8 L1171,799.2 L1171.5,799.2 L1172,799.6 L1172.5,799.4 L1173,799.6 L1173.5,799 L1174,799 L1174.5,799.6 L1175,799.7 L1175.5,799.8 L1176,799.4 L1176.5,799.4 L1177,799.6 L1177.5,799.3 L1178,799.6 L1178.5,799.6 L1179,800.1 L1179.5,799.8 L1180,799.3 L1180.5,798 L1181,796.4 L1181.5,795.1 L1182,793.1 L1182.3,792.6 L1182.5,792.7 L1183,794.3 L1183.5,796.7 L1184,798.3 L1184.5,799.5 L1185,799.2 L1185.5,798.9 L1186,799.5 L1186.5,799.4 L1187,799.7 L1187.5,799.5 L1188,799.2 L1188.5,799.1 L1189,798.9 L1189.5,799.6 L1190,799.7 L1190.5,799.5 L1191,799.5 L1191.5,799.4 L1192,798.9 L1192.5,799.2 L1193,798.6 L1193.5,797.8 L1194,795.8 L1194.5,794.4 L1194.8,793.7 L1195,793.4 L1195.5,795.3 L1196,797.3 L1196.5,798.2 L1197,799.4 L1197.5,799.8 L1198,799.4 L1198.5,799.4 L1199,799.6 L1199.5,798.8 L1200,797.8 L1200.5,794.1 L1201,787.5 L1201.5,777 L1202,762 L1202.5,746.6 L1203,737.2 L1203.2,736.1 L1203.5,738.6 L1204,749.7 L1204.5,764.8 L1205,778.8 L1205.5,788.4 L1206,794.8 L1206.5,797.2 L1207,798.4 L1207.5,798.4 L1208,798.7 L1208.5,798.8 L1209,798.8 L1209.5,798.4 L1210,798.2 L1210.5,798.8 L1211,798.6 L1211.5,798.2 L1212,797.5 L1212.5,796.4 L1213,793.4 L1213.5,786.6 L1214,774.9 L1214.5,755.8 L1215,732.1 L1215.5,711.4 L1216,702 L1216.5,711 L1217,732.7 L1217.5,755.8 L1218,774.9 L1218.5,787.7 L1219,794.5 L1219.5,796.9 L1220,797.9 L1220.5,798.8 L1221,798.8 L1221.5,799.5 L1222,799.1 L1222.5,799.7 L1223,799.5 L1223.5,799.2 L1224,799.2 L1224.5,798.9 L1225,799.3 L1225.5,799.1 L1226,799.7 L1226.5,799.7 L1227,799.4 L1227.5,799.2 L1228,799.4 L1228.5,799 L1229,799.5 L1229.5,798.6 L1230,797.8 L1230.5,796.3 L1231,793.9 L1231.5,792.5 L1231.8,792 L1232,792.3 L1232.5,793.9 L1233,795.8 L1233.5,797.5 L1234,798.2 L1234.5,798.5 L1235,799.3 L1235.5,799.2 L1236,799.4 L1236.5,799 L1237,799.2 L1237.5,799.1 L1238,799.2 L1238.5,799 L1239,798.6 L1239.5,798.7 L1240,798.6 L1240.5,798.4 L1241,798.8 L1241.5,798.4 L1242,797.8 L1242.5,797.1 L1243,794.7 L1243.5,790.8 L1244,785.3 L1244.5,778.4 L1245,773.2 L1245.4,771.4 L1245.5,771.9 L1246,775.1 L1246.5,780.6 L1247,786.6 L1247.5,791.9 L1248,795.6 L1248.5,797.2 L1249,798.6 L1249.5,798.7 L1250,799 L1250.5,798.7 L1251,798.4 L1251.5,799.1 L1252,799.3 L1252.5,799.4 L1253,798.7 L1253.5,798.2 L1254,798.1 L1254.5,798 L1255,798 L1255.5,798.1 L1256,797.7 L1256.5,797.7 L1257,798 L1257.5,797.5 L1258,797.9 L1258.5,797.6 L1259,797.2 L1259.5,795.7 L1260,792.9 L1260.5,786.3 L1261,770.9 L1261.5,741.8 L1262,698.1 L1262.5,643.9 L1263,594.3 L1263.5,572.8 L1264,594.3 L1264.5,643.4 L1265,696.8 L1265.5,739.7 L1266,765.1 L1266.5,775.5 L1267,774.3 L1267.5,769.7 L1268,766.4 L1268.1,765.8 L1268.5,768.7 L1269,776 L1269.5,784.7 L1270,791.6 L1270.5,795.2 L1271,796.7 L1271.5,798.2 L1272,798.3 L1272.5,798.9 L1273,799.1 L1273.5,799.2 L1274,799.4 L1274.5,799.3 L1275,799.1 L1275.5,798.5 L1276,798.9 L1276.5,798.8 L1277,798.9 L1277.5,799.4 L1278,798.8 L1278.5,799.2 L1279,798.6 L1279.5,799 L1280,799.3 L1280.5,799 L1281,799 L1281.5,799.6 L1282,799.5 L1282.5,799.4 L1283,799 L1283.5,798.5 L1284,798.6 L1284.5,798.7 L1285,798.5 L1285.5,798.5 L1286,798.3 L1286.5,798.8 L1287,799.1 L1287.5,798.8 L1288,798.6 L1288.5,798.8 L1289,798.8 L1289.5,799.4 L1290,799 L1290.5,798.8 L1291,799.3 L1291.5,798.7 L1292,798.9 L1292.5,798.7 L1293,799.1 L1293.5,798.9 L1294,798.6 L1294.5,797.1 L1295,795.4 L1295.5,792.5 L1296,789.1 L1296.5,787.2 L1296.7,787.2 L1297,787 L1297.5,789.4 L1298,792.6 L1298.5,795.2 L1299,796.6 L1299.5,797.6 L1300,797.9 L1300.5,798.5 L1301,798.5 L1301.5,798.2 L1302,798.2 L1302.5,798.3 L1303,798.3 L1303.5,798 L1304,797.7 L1304.5,797.5 L1305,798.4 L1305.5,798.6 L1306,798 L1306.5,798.3 L1307,798.8 L1307.5,798.4 L1308,797.4 L1308.5,796.4 L1309,794.5 L1309.5,791.4 L1310,789.1 L1310.4,787.7 L1310.5,788.5 L1311,790.2 L1311.5,792.9 L1312,795.4 L1312.5,796.1 L1313,794.6 L1313.5,791.2 L1314,785.8 L1314.5,780 L1315,777.4 L1315.5,778.3 L1316,778.9 L1316.5,776.8 L1317,772.6 L1317.5,769.9 L1317.6,770.3 L1318,772.4 L1318.5,780 L1319,787.8 L1319.5,793.1 L1320,795.4 L1320.5,796.1 L1321,796.9 L1321.5,796.7 L1322,796.6 L1322.5,796.7 L1323,796.5 L1323.5,796.9 L1324,796.4 L1324.5,795.9 L1325,796 L1325.5,796.1 L1326,796.2 L1326.5,795.9 L1327,795.3 L1327.5,793.9 L1328,790.4 L1328.5,785 L1329,777.5 L1329.5,770.2 L1330,765.5 L1330.2,764.5 L1330.5,765.6 L1331,770.1 L1331.5,776.8 L1332,783.3 L1332.5,786.6 L1333,788.3 L1333.5,789.2 L1334,789 L1334.5,789.2 L1335,788.3 L1335.5,788.5 L1336,788.4 L1336.5,787.9 L1337,786.7 L1337.5,784.9 L1338,783.1 L1338.5,779.9 L1339,775.3 L1339.5,769.1 L1340,761.1 L1340.5,751.4 L1341,740 L1341.5,727.3 L1342,713.2 L1342.5,700.3 L1343,689.5 L1343.5,682.3 L1343.9,679.6 L1344,679.2 L1344.5,681.1 L1345,687.4 L1345.5,696.4 L1346,706.9 L1346.5,716.5 L1347,723.9 L1347.5,728.2 L1348,728.2 L1348.5,722.8 L1349,712.3 L1349.5,695.5 L1350,674.3 L1350.5,648.4 L1351,618.8 L1351.5,588.2 L1352,558.8 L1352.5,532.4 L1353,513.1 L1353.5,503.2 L1353.7,502.4 L1354,505.6 L1354.5,518.4 L1355,540.8 L1355.5,570.2 L1356,602.2 L1356.5,634.5 L1357,665.8" fill="none" stroke="#4682b4" stroke-width="1.1"/>
<g stroke="#ff0000" stroke-width="1.5" opacity="0.62"><line x1="593.3" y1="611" x2="593.3" y2="644"/><line x1="616.8" y1="733.4" x2="616.8" y2="766.4"/><line x1="628.7" y1="597.3" x2="628.7" y2="630.3"/><line x1="966.8" y1="614.9" x2="966.8" y2="647.9"/><line x1="974" y1="697.7" x2="974" y2="730.7"/><line x1="977.7" y1="620.6" x2="977.7" y2="653.6"/><line x1="992.2" y1="735.2" x2="992.2" y2="768.2"/><line x1="1001.7" y1="678.9" x2="1001.7" y2="711.9"/><line x1="1018.7" y1="161.7" x2="1018.7" y2="194.7"/><line x1="1028.9" y1="617.2" x2="1028.9" y2="650.2"/><line x1="1039.8" y1="672.8" x2="1039.8" y2="705.8"/><line x1="1049.7" y1="716.4" x2="1049.7" y2="749.4"/><line x1="1057.8" y1="682" x2="1057.8" y2="715"/><line x1="1068" y1="592.3" x2="1068" y2="625.3"/><line x1="1078.7" y1="727" x2="1078.7" y2="760"/><line x1="1120.6" y1="682.4" x2="1120.6" y2="715.4"/><line x1="1126.8" y1="730.6" x2="1126.8" y2="763.6"/><line x1="1162.8" y1="737" x2="1162.8" y2="770"/><line x1="1203.2" y1="714" x2="1203.2" y2="747"/><line x1="1216" y1="680.5" x2="1216" y2="713.5"/><line x1="1263.5" y1="551.3" x2="1263.5" y2="584.3"/><line x1="1343.9" y1="657.8" x2="1343.9" y2="690.8"/><line x1="1353.7" y1="480.6" x2="1353.7" y2="513.6"/></g>
</g>
<line x1="94" y1="758.3" x2="1357" y2="758.3" stroke="#2e7d32" stroke-width="1.1" stroke-dasharray="4,2.5"/>
<line x1="94" y1="851" x2="1357" y2="851" stroke="#4caf50" stroke-width="1.5" stroke-dasharray="3,3.5" opacity="0.85"/>
<line x1="276" y1="118" x2="276" y2="882" stroke="#888" stroke-width="1" stroke-dasharray="2,2.3"/>
<circle cx="275.8" cy="803" r="4.1" fill="none" stroke="#666" stroke-width="1.8"/>
<path d="M93.3,882.5 V106.5 H1357.5" fill="none" stroke="#555" stroke-width="1.5"/><path d="M1357.5,106.5 V882.5 H93.3" fill="none" stroke="#333" stroke-width="1.5"/>
<g font-family="Liberation Sans" font-size="10.5" fill="#333"><text x="93.2" y="893" text-anchor="middle">5,000</text><text x="222.4" y="893" text-anchor="middle">4,500</text><text x="351.6" y="893" text-anchor="middle">4,000</text><text x="480.8" y="893" text-anchor="middle">3,500</text><text x="610" y="893" text-anchor="middle">3,000</text><text x="739.2" y="893" text-anchor="middle">2,500</text><text x="868.4" y="893" text-anchor="middle">2,000</text><text x="997.6" y="893" text-anchor="middle">1,500</text><text x="1126.8" y="893" text-anchor="middle">1,000</text><text x="1256" y="893" text-anchor="middle">500</text><text x="89" y="808.8" text-anchor="end">0.0</text><text x="89" y="593.5" text-anchor="end">0.20</text><text x="89" y="378.2" text-anchor="end">0.40</text><text x="89" y="162.9" text-anchor="end">0.60</text></g>
<text x="275.7" y="117" text-anchor="middle" font-family="Liberation Sans" font-size="13" fill="#000">4292.119</text>
<text x="725" y="914" text-anchor="middle" font-family="Liberation Sans" font-size="13" fill="#000">X (1/CM)</text>
<text transform="translate(45.5,494) rotate(-90)" text-anchor="middle" font-family="Liberation Sans" font-size="13" fill="#000">Y (TRANSMITTANCE)</text>
</svg>
<div class="info">
<div class="hd"><span style="position:absolute;left:25px;top:25px;font-size:12px;color:#222">Info</span>
<svg style="position:absolute;left:406px;top:26px" width="14" height="10" viewBox="0 0 14 10"><path d="M1.8,7.8 L7,2.6 L12.2,7.8" fill="none" stroke="#666" stroke-width="1.6"/></svg></div>
<div style="position:absolute;left:0;top:99px;width:445px;height:1px;background:#eee"></div>
<span style="position:absolute;left:26px;top:76px;font-size:14px;color:#333;white-space:nowrap"><b>Title : </b>raman_jcamp</span>
<div class="ft"></div>
</div>
<svg width="1827" height="970" style="position:absolute;left:0;top:0">
<path d="M1590.7,268L1595.7,268.9M1602.5,284.2L1593.1,288.6M1585.4,286.9L1578.8,279.1M1578.8,279.1L1568.9,281.6M1558.9,296.7L1565.9,305M1573.9,307.4L1584,304.6M1584,304.6L1587,295.4M1588,322.6L1584.6,326.1M1568.2,322.7L1568.8,313.8M1558.9,296.7L1544.5,299.5M1602.5,284.2L1615.2,291.5M1568.2,322.7L1554.7,329.9M1544.5,299.5L1534.8,288.4M1519,291.2L1515.3,305.6M1525.5,317.2L1540.8,313.9M1528.4,345.2L1528.4,329.9M1541.9,322.4L1554.7,329.9M1554.7,345.2L1541.9,352.7M1528.4,345.2L1519.8,351.2M1511.6,351.2L1502.9,345.2M1515.7,359L1515.7,367.6M1502.9,329.9L1502.9,345.2M1489.8,352.7L1476.7,345.2M1476.7,329.9L1489.8,322.4M1489.8,352.7L1489.8,367.6M1489.8,367.6L1502.9,375M1515.7,367.6L1528.8,375M1528.8,390L1515.7,397.4M1502.9,390L1502.9,375M1489.8,367.6L1479.7,367.6M1489.8,367.6L1485.4,375.8M1628.4,284.2L1641.6,291.5M1641.6,307.2L1628.4,314.6M1615.2,307.2L1615.2,291.5M1641.6,307.2L1650.1,312.4M1658.7,312.4L1667.1,307.2M1654.4,320L1654.4,329.3M1667.1,307.2L1667.1,291.5M1680.3,284.2L1693,291.5M1693,307.2L1680.3,314.6M1680.3,314.6L1680.3,329.3M1680.3,329.3L1667.1,336.6M1667.1,336.6L1667.1,351.8M1654.4,359.1L1641.1,351.8M1641.1,336.6L1654.4,329.3M1680.3,329.3L1690.6,329.3M1680.3,329.3L1685.2,337.6M1578.8,279.1L1583.3,271.4M1582.2,278.5L1584.4,274.6M1601.3,274.8L1602.5,284.2M1599,277.3L1599.6,282.4M1562.3,287.5L1558.9,296.7M1564,290.5L1562.1,295.5M1584,304.6L1589.1,314.6M1582.7,307.7L1585.8,313.8M1576.8,327.3L1568.2,322.7M1576.1,324L1571.4,321.5M1534.8,288.4L1519,291.2M1533.1,291.3L1521.6,293.4M1515.3,305.6L1525.5,317.2M1518.7,305.5L1526,313.8M1540.8,313.9L1544.5,299.5M1538.8,311.1L1541.4,301M1528.4,329.9L1541.9,322.4M1531.6,331.1L1541.2,325.7M1554.7,329.9L1554.7,345.2M1552.1,332.1L1552.1,343M1541.9,352.7L1528.4,345.2M1541.2,349.4L1531.6,344M1489.8,322.4L1502.9,329.9M1490.4,325.7L1499.7,331.1M1502.9,345.2L1489.8,352.7M1499.7,344L1490.4,349.4M1476.7,345.2L1476.7,329.9M1479.3,343L1479.3,332.1M1515.7,367.6L1502.9,375M1515.1,371L1506.1,376.1M1528.8,375L1528.8,390M1526.2,377.2L1526.2,387.8M1515.7,397.4L1502.9,390M1515.1,394L1506.1,388.9M1615.2,291.5L1628.4,284.2M1618.4,292.7L1627.7,287.5M1641.6,291.5L1641.6,307.2M1639,293.7L1639,305M1628.4,314.6L1615.2,307.2M1627.8,311.3L1618.4,306M1667.1,291.5L1680.3,284.2M1670.3,292.7L1679.6,287.5M1693,291.5L1693,307.2M1690.4,293.7L1690.4,305M1680.3,314.6L1667.1,307.2M1679.7,311.3L1670.3,306M1654.4,329.3L1667.1,336.6M1655,332.7L1663.9,337.8M1667.1,351.8L1654.4,359.1M1663.9,350.6L1655,355.7M1641.1,351.8L1641.1,336.6M1643.7,349.6L1643.7,338.8" stroke="#111" stroke-width="1" fill="none" stroke-linecap="round"/>
<g font-family="Liberation Sans" font-size="7.2" font-weight="bold" fill="#000" stroke="#000" stroke-width="0.25" text-anchor="middle"><text x="1591.4" y="321.6">N</text><text x="1564" y="285.4">N</text><text x="1654.4" y="317.6">N</text><text x="1569.1" y="311.4">N</text><text x="1581.2" y="332.3">N</text><text x="1515.7" y="356.6">N</text><text x="1585.8" y="269.7">N</text><text x="1588.6" y="293.3">N</text><text x="1600.6" y="272.4">N</text></g>
<g font-family="Liberation Sans" font-size="6.4" font-weight="bold" fill="#000" stroke="#000" stroke-width="0.25" letter-spacing="-0.3">
<text x="1465.3" y="371.6">H<tspan font-size="5" dy="1">3</tspan><tspan dy="-1">C</tspan></text>
<text x="1473.1" y="385">H<tspan font-size="5" dy="1">3</tspan><tspan dy="-1">C</tspan></text>
<text x="1693.6" y="333">CH<tspan font-size="5" dy="1">3</tspan></text>
<text x="1686.3" y="346">CH<tspan font-size="5" dy="1">3</tspan></text>
</g>
</svg>
</div></body></html>
